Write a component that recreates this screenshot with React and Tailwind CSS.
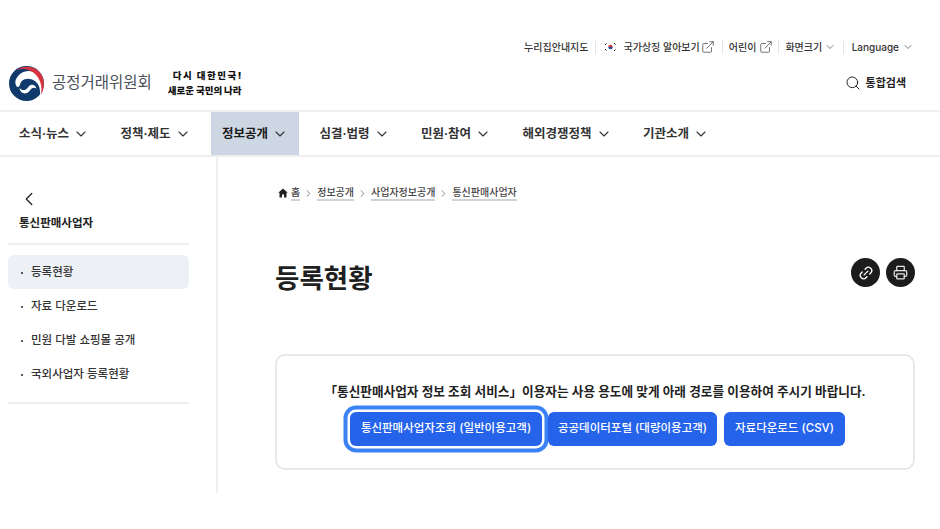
import React from 'react';
import { ChevronDown, ChevronLeft, ChevronRight, ExternalLink, Search, Link2, Printer } from 'lucide-react';

const FONT = 'font-["Inter","Noto_Sans_CJK_KR",sans-serif]';

function Taegeuk() {
  return (
    <svg width="35" height="35" viewBox="0 0 100 100" className="shrink-0">
      <circle cx="50" cy="50" r="50" fill="#0f3a6b" />
      <path d="M18 44C26 16 60 4 84 26C98 40 100 64 88 86C92 62 82 44 64 38C46 32 34 42 31 54C28 64 18 62 18 44Z" fill="#fff" />
      <path d="M20 12C50 -8 90 4 98 38C102 54 98 72 91 82C98 52 84 24 62 14C46 7 32 7 20 12Z" fill="#d8343f" />
      <path d="M30 62C38 74 50 68 56 59C62 50 76 52 78 64C70 60 64 63 60 69C50 84 32 80 30 62Z" fill="#fff" />
    </svg>
  );
}

function Flag() {
  return (
    <svg width="13" height="10" viewBox="0 0 26 20" className="shrink-0">
      <rect width="26" height="20" fill="#fff" />
      <path d="M8.5 10a4.5 4.5 0 0 1 9 0z" fill="#d8343f" />
      <path d="M8.5 10a4.5 4.5 0 0 0 9 0z" fill="#1c4f9c" />
      <g stroke="#222" strokeWidth="2" strokeDasharray="4 1">
        <path d="M2 6l4-4M20 2l4 4M2 14l4 4M20 18l4-4" />
      </g>
    </svg>
  );
}

function HomeIcon() {
  return (
    <svg width="10" height="10" viewBox="0 0 20 20" className="mr-[3px] shrink-0">
      <path d="M10 1L0.5 9.5H3V19H8V13H12V19H17V9.5H19.5Z" fill="#222" />
    </svg>
  );
}

const Sep = () => <span className="block w-px h-[13px] bg-[#e2e4e8]" />;

const navItems = ['소식·뉴스', '정책·제도', '정보공개', '심결·법령', '민원·참여', '해외경쟁정책', '기관소개'];
const sideItems = ['등록현황', '자료 다운로드', '민원 다발 쇼핑몰 공개', '국외사업자 등록현황'];
const crumbs = ['홈', '정보공개', '사업자정보공개', '통신판매사업자'];

export default function App() {
  return (
    <div className={`w-[940px] h-[529px] overflow-hidden bg-white text-[#222] ${FONT}`}>
      <header className="h-[112px] border-b-2 border-[#eeeeee] pt-[39px]">
        <div className="flex items-center justify-end h-[16px] pr-[26.5px] text-[10px] font-medium text-[#333]">
          <span>누리집안내지도</span>
          <span className="ml-[7px]"><Sep /></span>
          <span className="ml-[8px] flex items-center gap-[6px]"><Flag />국가상징 알아보기</span>
          <ExternalLink size={14} strokeWidth={1.4} className="ml-[1.5px] text-[#555]" />
          <span className="ml-[6.5px]"><Sep /></span>
          <span className="ml-[6px]">어린이</span>
          <ExternalLink size={14} strokeWidth={1.4} className="ml-[2.5px] text-[#555]" />
          <span className="ml-[5.5px]"><Sep /></span>
          <span className="ml-[6px]">화면크기</span>
          <ChevronDown size={12} strokeWidth={1.5} className="ml-[2px] text-[#555]" />
          <span className="ml-[7px]"><Sep /></span>
          <span className="ml-[7.5px] pt-[1px]">Language</span>
          <ChevronDown size={12} strokeWidth={1.5} className="ml-[2.5px] text-[#555]" />
        </div>
        <div className="flex items-center h-[36px] mt-[10px] pl-[9px] pr-[34px]">
          <Taegeuk />
          <span className="ml-[8px] text-[15.5px] text-[#4a4f57]">공정거래위원회</span>
          <div className="ml-[16px] flex flex-col text-[9.5px] leading-[15px] font-black text-[#111]">
            <span className="pl-[5px] tracking-[1.5px]">다시 대한민국!</span>
            <span>새로운 국민의 나라</span>
          </div>
          <div className="ml-auto flex items-center gap-[5px] text-[11px] font-bold text-[#222]">
            <Search size={16} strokeWidth={1.5} />
            <span>통합검색</span>
          </div>
        </div>
      </header>

      <nav className="h-[45px] border-b-2 border-[#eeeeee] flex pl-[8px] gap-[9.5px] text-[12.5px] font-semibold text-[#333]">
        {navItems.map((n, i) => (
          <div key={n} className={`flex items-center gap-[4px] h-[43px] px-[11px] ${i === 2 ? 'bg-[#cdd7e4] text-[#1a1a1a]' : ''}`}>
            <span className="mt-[1px]">{n}</span>
            <ChevronDown size={16} strokeWidth={1.6} className="text-[#333] mt-[1px]" />
          </div>
        ))}
      </nav>

      <div className="flex">
        <aside className="w-[218px] h-[336px] border-r-2 border-[#eeeeee] pl-[8px] pr-[27px] shrink-0">
          <div className="pl-[11px] pt-[31px]">
            <ChevronLeft size={22} strokeWidth={1.4} className="-ml-[1.5px] text-[#222]" />
          </div>
          <div className="pl-[11px] mt-[4.5px] pb-[11.5px] text-[11.5px] font-bold leading-[17px] text-[#222]">통신판매사업자</div>
          <div className="border-t-2 border-[#eeeeee] pt-[10px] pb-[11px]">
            {sideItems.map((s, i) => (
              <div key={s} className={`h-[34px] flex items-center pl-[13px] pt-[2px] rounded-[6px] text-[11.5px] font-medium text-[#333] ${i === 0 ? 'bg-[#edf0f5]' : ''}`}>
                <span className="w-[2px] h-[2px] rounded-full bg-[#222] mr-[8px]" />
                {s}
              </div>
            ))}
          </div>
          <div className="border-t-2 border-[#eeeeee]" />
        </aside>

        <main className="flex-1 pl-[57px] pr-[25px]">
          <div className="flex items-center h-[16px] mt-[28px] pl-[3px] text-[10px] font-medium text-[#444]">
            <HomeIcon />
            {crumbs.map((c, i) => (
              <React.Fragment key={c}>
                {i > 0 && <ChevronRight size={11} strokeWidth={1.5} className="mx-[3px] text-[#555]" />}
                <span className="border-b-2 border-[#cfd2d6] leading-[13px]">{c}</span>
              </React.Fragment>
            ))}
          </div>
          <div className="flex justify-between mt-[57px] h-[70px]">
            <h1 className="text-[26.5px] font-semibold leading-[44px] -mt-[2px] text-[#1f1f1f]">등록현황</h1>
            <div className="flex gap-[6px]">
              <span className="w-[29px] h-[29px] rounded-full bg-[#1c1c1c] flex items-center justify-center text-white"><Link2 size={16} strokeWidth={2} className="-rotate-45" /></span>
              <span className="w-[29px] h-[29px] rounded-full bg-[#1c1c1c] flex items-center justify-center text-[#e5e5e5]"><Printer size={15} strokeWidth={2} /></span>
            </div>
          </div>
          <section className="mt-[26px] h-[116px] border-2 border-[#e8e8e8] rounded-[10px] flex flex-col items-center pt-[27px]">
            <p className="text-[12.65px] font-semibold leading-[18px] text-[#222]">「통신판매사업자 정보 조회 서비스」이용자는 사용 용도에 맞게 아래 경로를 이용하여 주시기 바랍니다.</p>
            <div className="flex mt-[11px] ml-[5px] text-[11.5px] font-medium text-white">
              <span className="h-[34px] w-[192px] rounded-[6px] bg-[#2563eb] flex items-center justify-center shadow-[0_0_0_2.5px_#fff,0_0_0_6.5px_#3b82f6]">통신판매사업자조회 (일반이용고객)</span>
              <span className="h-[34px] w-[169px] ml-[6px] rounded-[6px] bg-[#2563eb] flex items-center justify-center">공공데이터포털 (대량이용고객)</span>
              <span className="h-[34px] w-[121px] ml-[7px] rounded-[6px] bg-[#2563eb] flex items-center justify-center">자료다운로드 (CSV)</span>
            </div>
          </section>
        </main>
      </div>
    </div>
  );
}
